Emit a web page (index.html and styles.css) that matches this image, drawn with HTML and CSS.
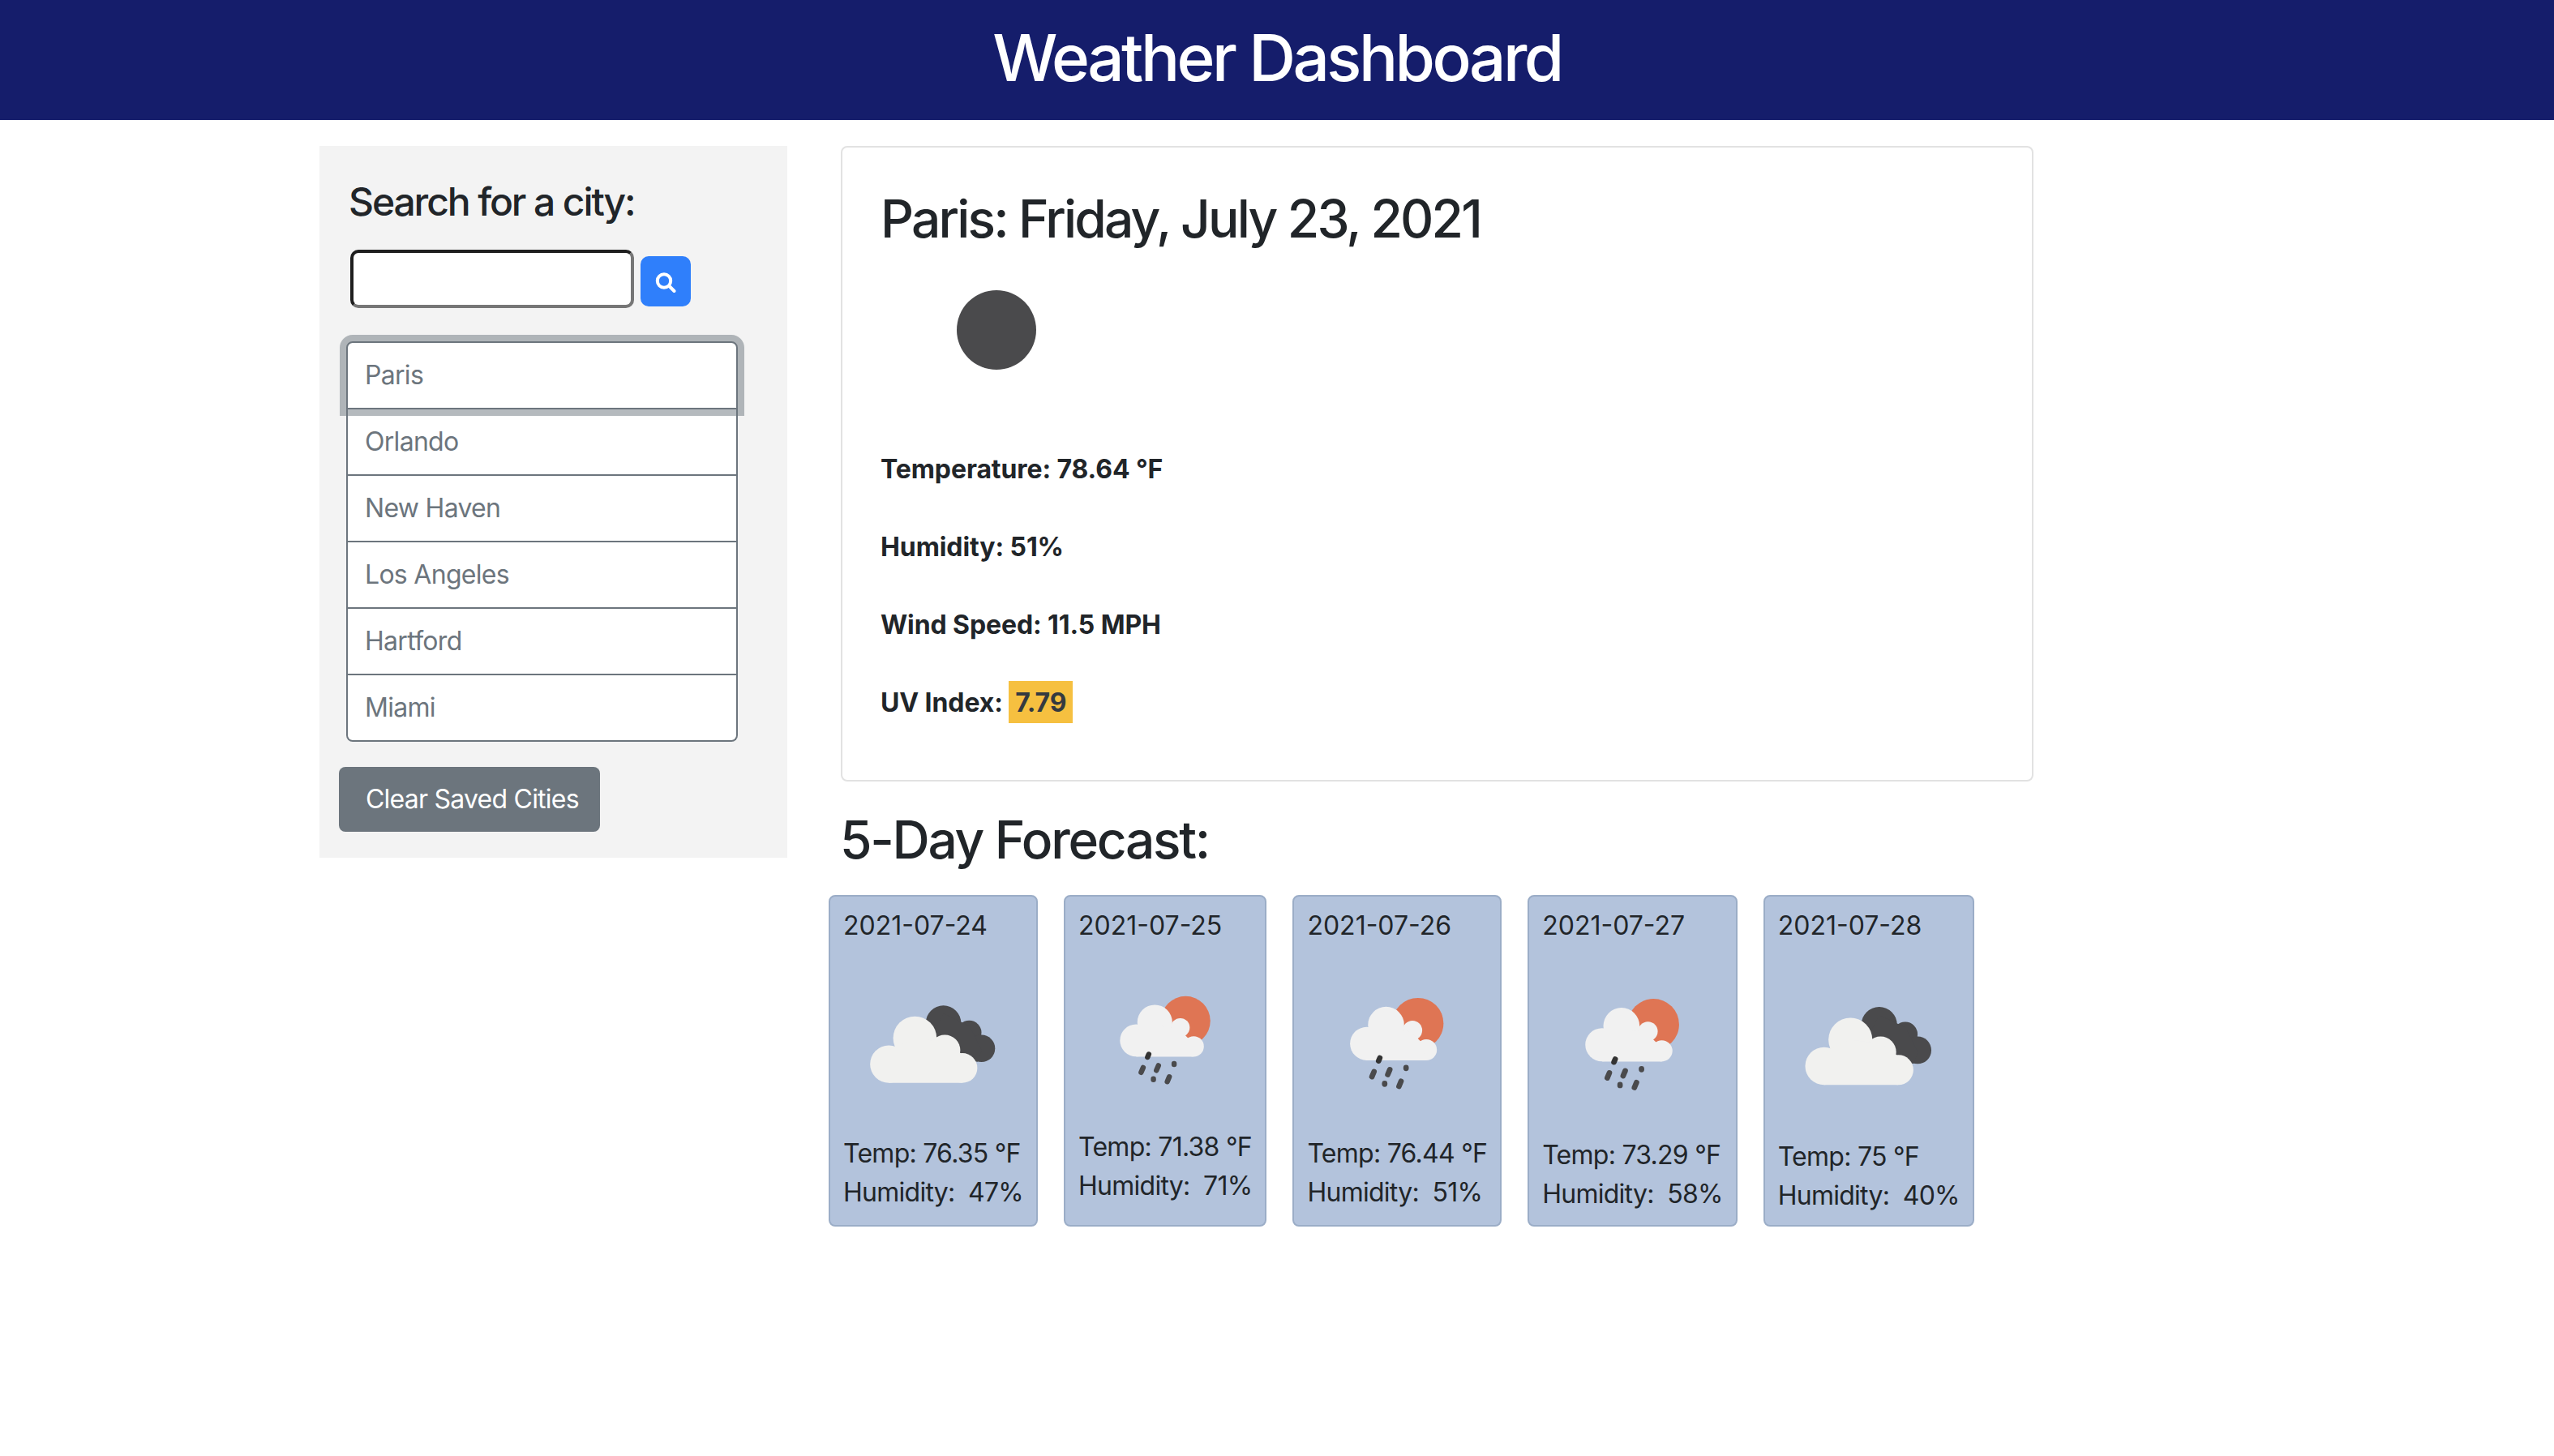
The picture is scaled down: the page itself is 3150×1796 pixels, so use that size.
FILE: index.html
```html
<!DOCTYPE html>
<html lang="en">
<head>
  <meta charset="UTF-8" />
  <title>Weather Dashboard</title>
  <link rel="stylesheet" href="styles.css">
</head>
<body>

<svg class="sprites" aria-hidden="true">
  <symbol id="icon-clouds" viewBox="0 0 221 221">
    <g fill="#4a4a4c">
      <circle cx="123" cy="91.7" r="21.7"/>
      <circle cx="154.7" cy="103.3" r="15"/>
      <circle cx="169.7" cy="122.7" r="16.7"/>
      <polygon points="123,80 155,95 170,125 165,139 130,135 108,110"/>
    </g>
    <g fill="#f1f1ef">
      <circle cx="56" cy="142" r="23"/>
      <circle cx="88" cy="110" r="26.7"/>
      <circle cx="124.7" cy="125" r="19"/>
      <circle cx="146.3" cy="146.7" r="18.3"/>
      <polygon points="56,165 56,125 88,110 125,115 146,130 146,165"/>
    </g>
  </symbol>
  <symbol id="icon-rain" viewBox="0 0 216 216">
    <circle cx="133.3" cy="90" r="30.7" fill="#df7554"/>
    <g fill="#f1f1f1">
      <circle cx="71.7" cy="114.3" r="20"/>
      <circle cx="95" cy="91.7" r="21.7"/>
      <circle cx="126.7" cy="98.3" r="11.7"/>
      <circle cx="143.3" cy="121.7" r="12.7"/>
      <polygon points="72,134.4 72,110 95,95 125,100 137,112 143,134.4"/>
    </g>
    <g stroke="#4a4a4c" stroke-width="6.5" stroke-linecap="round">
      <line x1="87.5" y1="131.5" x2="86" y2="135" stroke="#333"/>
      <line x1="80.5" y1="148" x2="78" y2="154"/>
      <line x1="99.5" y1="145.5" x2="97" y2="151.5"/>
      <line x1="119" y1="143" x2="119" y2="144"/>
      <line x1="93.3" y1="162" x2="93.3" y2="163"/>
      <line x1="113" y1="159.5" x2="110.5" y2="165.5"/>
    </g>
  </symbol>
</svg>

<header class="topbar">
  <h1>Weather Dashboard</h1>
</header>

<div class="layout">
  <aside class="sidebar">
    <h4>Search for a city:</h4>
    <form class="search">
      <input type="text" />
      <button type="button" class="search-btn" aria-label="Search">
        <svg viewBox="0 0 26 26" width="26" height="26">
          <circle cx="11" cy="10.5" r="8.2" fill="none" stroke="#fff" stroke-width="4"/>
          <line x1="17.5" y1="17" x2="23.5" y2="23" stroke="#fff" stroke-width="4" stroke-linecap="round"/>
        </svg>
      </button>
    </form>
    <ul class="cities">
      <li class="active">Paris</li>
      <li>Orlando</li>
      <li>New Haven</li>
      <li>Los Angeles</li>
      <li>Hartford</li>
      <li>Miami</li>
    </ul>
    <button type="button" class="clear-btn">Clear Saved Cities</button>
  </aside>

  <main class="content">
    <section class="today">
      <h2>Paris: Friday, July 23, 2021</h2>
      <div class="today-icon"></div>
      <div class="stats">
        <p>Temperature: 78.64 °F</p>
        <p>Humidity: 51%</p>
        <p>Wind Speed: 11.5 MPH</p>
        <p>UV Index: <span class="uv">7.79</span></p>
      </div>
    </section>

    <h2 class="forecast-title">5-Day Forecast:</h2>
    <div class="forecast">
      <div class="day">
        <div class="day-date">2021-07-24</div>
        <svg class="day-icon"><use href="#icon-clouds"/></svg>
        <div>Temp: 76.35 °F</div>
        <div>Humidity:&nbsp; 47%</div>
      </div>
      <div class="day">
        <div class="day-date">2021-07-25</div>
        <svg class="day-icon"><use href="#icon-rain"/></svg>
        <div>Temp: 71.38 °F</div>
        <div>Humidity:&nbsp; 71%</div>
      </div>
      <div class="day">
        <div class="day-date">2021-07-26</div>
        <svg class="day-icon"><use href="#icon-rain"/></svg>
        <div>Temp: 76.44 °F</div>
        <div>Humidity:&nbsp; 51%</div>
      </div>
      <div class="day day-low">
        <div class="day-date">2021-07-27</div>
        <svg class="day-icon"><use href="#icon-rain"/></svg>
        <div>Temp: 73.29 °F</div>
        <div>Humidity:&nbsp; 58%</div>
      </div>
      <div class="day day-low">
        <div class="day-date">2021-07-28</div>
        <svg class="day-icon"><use href="#icon-clouds"/></svg>
        <div>Temp: 75 °F</div>
        <div>Humidity:&nbsp; 40%</div>
      </div>
    </div>
  </main>
</div>

</body>
</html>
```

FILE: styles.css
```css
body {
  font-family: Inter, sans-serif;
  font-size: 32px;
  line-height: 48px;
  margin: 0;
  color: #212529;
  background: #fff;
}

.sprites {
  display: none;
}

h1, h2, h4 {
  margin: 0;
  font-weight: 500;
  line-height: 1.2;
  letter-spacing: -0.044em;
}

/* Header */
.topbar {
  box-sizing: border-box;
  background: #151d6b;
  color: #fff;
  height: 148px;
  padding-bottom: 6px;
  display: flex;
  align-items: center;
  justify-content: center;
}

.topbar h1 {
  font-size: 80px;
}

.layout {
  display: flex;
  align-items: flex-start;
  gap: 66px;
  padding: 32px 0 0 394px;
}

/* Sidebar */
.sidebar {
  box-sizing: border-box;
  width: 577px;
  padding: 40px 0 32px 24px;
  background: #f3f3f3;
}

.sidebar h4 {
  font-size: 48px;
  margin-left: 12px;
}

.search {
  display: flex;
  align-items: flex-end;
  gap: 8px;
  margin: 30px 0 0 14px;
}

.search input {
  box-sizing: border-box;
  width: 350px;
  height: 72px;
  padding: 0;
  background: #fff;
  border: 4px solid;
  border-color: #1f1f1f #767676 #767676 #1f1f1f;
  border-radius: 10px;
}

.search-btn {
  display: flex;
  align-items: center;
  justify-content: center;
  width: 62px;
  height: 62px;
  margin-bottom: 2px;
  padding: 4px 0 0;
  border: none;
  border-radius: 10px;
  background: #2f7ffb;
}

.cities {
  list-style: none;
  box-sizing: border-box;
  width: 483px;
  margin: 41px 0 0 9px;
  padding: 0;
  letter-spacing: -0.022em;
}

.cities li {
  box-sizing: border-box;
  height: 82px;
  padding: 16px 21px;
  background: #fff;
  color: #6c757d;
  border: 2px solid #6c757d;
  border-top: none;
}

.cities li:first-child {
  height: 84px;
  border-top: 2px solid #6c757d;
  border-radius: 8px 8px 0 0;
}

.cities li:last-child {
  border-radius: 0 0 8px 8px;
}

.cities li.active {
  position: relative;
  z-index: 1;
  box-shadow: 0 0 0 8px rgba(108, 117, 125, 0.5);
}

.clear-btn {
  display: block;
  height: 80px;
  margin-top: 31px;
  padding: 0 26px 0 33px;
  font: inherit;
  letter-spacing: -0.024em;
  color: #fff;
  background: #6c757d;
  border: none;
  border-radius: 8px;
}

/* Today card */
.today {
  box-sizing: border-box;
  width: 1471px;
  height: 784px;
  padding: 48px 48px 48px 47px;
  border: 2px solid #e2e2e2;
  border-radius: 8px;
}

.today h2, .forecast-title {
  font-size: 64px;
}

.today h2 {
  padding-top: 2px;
}

.today-icon {
  width: 98px;
  height: 98px;
  margin: 49px 0 99px 94px;
  border-radius: 50%;
  background: #4a4a4c;
}

.stats p {
  margin: 0 0 48px;
  font-weight: 700;
  letter-spacing: -0.003em;
}

.uv {
  padding: 6.5px 8px;
  color: #343a40;
  background: #f6c040;
}

/* Forecast */
.forecast-title {
  margin: 34px 0 29px -1px;
  letter-spacing: -0.036em;
}

.forecast {
  display: flex;
  align-items: stretch;
  gap: 32px;
  margin-left: -15px;
  letter-spacing: -0.023em;
}

.day {
  box-sizing: border-box;
  height: 409px;
  padding: 12px 16px 0;
  background: #b3c3dc;
  border: 2px solid #9badc7;
  border-radius: 8px;
}

.day-date {
  letter-spacing: 0;
}

.day-icon {
  display: block;
  width: 0;
  min-width: 100%;
  aspect-ratio: 1;
  margin: 4px 0 7px;
}

.day-low .day-icon {
  margin: 5px 0 8px;
}
```
